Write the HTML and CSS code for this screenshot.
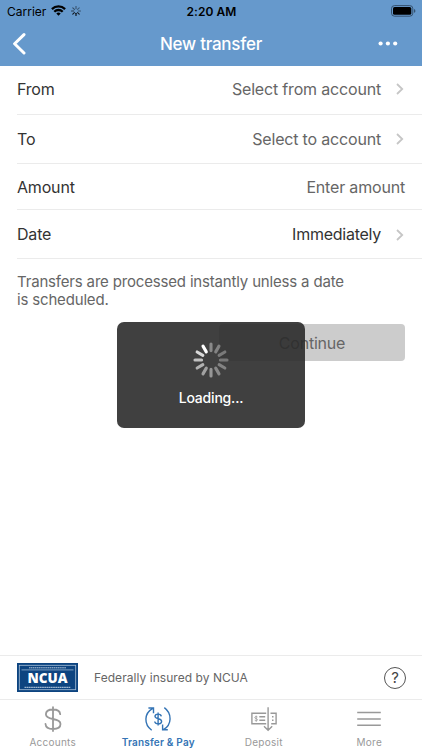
FILE: index.html
```html
<!DOCTYPE html>
<html lang="en">
<head>
<meta charset="utf-8">
<title>New transfer</title>
<link rel="stylesheet" href="styles.css">
</head>
<body>
<div class="app">
  <header class="header">
    <div class="status">
      <div class="status-left">
        <span class="carrier">Carrier</span>
        <svg class="wifi" width="15" height="11" viewBox="0 0 15 11" fill="none" stroke="#000" stroke-width="2.3"><path d="M.9 4.1a9.6 9.6 0 0 1 13.2 0M3.3 6.7a6 6 0 0 1 8.4 0"/><path d="M7.5 10.8 5.3 8.5a3.1 3.1 0 0 1 4.4 0z" fill="#000" stroke="none"/></svg>
        <svg class="activity" width="10" height="10" viewBox="-5 -5 10 10" stroke="#000" stroke-width="1.1" stroke-linecap="round"><path d="M0-2.2v-2.3" opacity=".45"/><path d="m1.6-1.6 1.6-1.6" opacity=".4"/><path d="M2.2 0h2.3" opacity=".45"/><path d="m1.6 1.6 1.6 1.6" opacity=".8"/><path d="M0 2.2v2.3"/><path d="m-1.6 1.6-1.6 1.6" opacity=".85"/><path d="M-2.2 0h-2.3" opacity=".6"/><path d="m-1.6-1.6-1.6-1.6" opacity=".5"/></svg>
      </div>
      <span class="time">2:20 AM</span>
      <svg class="battery" width="25" height="12" viewBox="0 0 25 12"><rect x=".5" y=".6" width="21.3" height="10.6" rx="3" fill="none" stroke="#2f4964" stroke-width=".9"/><rect x="2" y="2" width="18.3" height="7.8" rx="1.6"/><path d="M23.1 4q1.3.6 1.3 1.9t-1.3 1.9z" fill="#2f4964"/></svg>
    </div>
    <div class="nav">
      <svg class="back" width="14" height="22" viewBox="0 0 14 22" fill="none" stroke="#fff" stroke-width="3" stroke-linecap="round" stroke-linejoin="round"><path d="m12 1.6-9.400 9.200 9.400 9.200"/></svg>
      <h1>New transfer</h1>
      <svg class="dots" width="20" height="5" viewBox="0 0 20 5" fill="#fff"><circle cx="2.6" cy="2.5" r="2.1"/><circle cx="9.9" cy="2.5" r="2.1"/><circle cx="17.2" cy="2.5" r="2.1"/></svg>
    </div>
  </header>

  <main class="form">
    <div class="row row-from"><span class="label">From</span><span class="value">Select from account</span><svg class="chevron" width="8" height="12" viewBox="0 0 8 12"><path d="m1 1 5.2 5-5.2 5"/></svg></div>
    <div class="row row-to"><span class="label">To</span><span class="value">Select to account</span><svg class="chevron" width="8" height="12" viewBox="0 0 8 12"><path d="m1 1 5.2 5-5.2 5"/></svg></div>
    <div class="row row-amount"><span class="label">Amount</span><span class="value">Enter amount</span></div>
    <div class="row row-date"><span class="label">Date</span><span class="value chosen">Immediately</span><svg class="chevron" width="8" height="12" viewBox="0 0 8 12"><path d="m1 1 5.2 5-5.2 5"/></svg></div>
    <p class="note">Transfers are processed instantly unless a date<br>is scheduled.</p>
    <button class="continue">Continue</button>
  </main>

  <section class="insured">
    <div class="ncua">
      <svg width="61" height="29" viewBox="0 0 61 29"><rect width="61" height="29" fill="#0d4480"/><rect x="2.3" y="2.3" width="56.4" height="24.4" fill="none" stroke="#a9bfd7" stroke-width=".8"/><path d="M12 4.8h37" stroke="#b9cbdd" stroke-width="1" stroke-dasharray="1.5 .4"/><path d="M4.5 6.9h52" stroke="#8aa8c8" stroke-width=".9"/><path d="M7.5 24.4h46" stroke="#9db6d0" stroke-width="1.2" stroke-dasharray="1.8 .4"/><text x="30.5" y="20.2" text-anchor="middle" textLength="40" lengthAdjust="spacingAndGlyphs">NCUA</text></svg>
    </div>
    <span class="insured-text">Federally insured by NCUA</span>
    <span class="help">?</span>
  </section>

  <nav class="tabs">
    <div class="tab tab-accounts">
      <svg width="28" height="28" viewBox="0 0 28 28" fill="none" stroke="#999" stroke-width="1.8" stroke-linecap="round"><path d="M14 2.200v23.800M21.200 9.200C21 6.200 18.200 4.500 14 4.500S6.900 6.300 6.900 9.300c0 3.200 3 4 7.100 4.700s7.500 1.600 7.500 5c0 3.100-3.100 5-7.500 5s-7.300-1.900-7.500-5"/></svg>
      <span>Accounts</span>
    </div>
    <div class="tab tab-transfer active">
      <svg width="28" height="28" viewBox="0 0 28 28" fill="none" stroke="#3474b5" stroke-width="1.4"><path d="M7.700 25.200C-.2 19.500-.2 8.300 8.800 3.300M4.400 3h5.100v5.200M20.300 2.600c7.900 5.800 7.800 17-.9 22.100M18.600 19.500v5.300h5.200"/><path d="M14.100 7.600v12.800M17.300 11.300c-.2-1.500-1.400-2.200-3.200-2.200s-3.100.8-3.100 2.200c0 1.700 1.500 2 3.200 2.400 1.800.4 3.400.9 3.400 2.800 0 1.500-1.400 2.400-3.400 2.400s-3.300-.9-3.500-2.400"/></svg>
      <span>Transfer &amp; Pay</span>
    </div>
    <div class="tab tab-deposit">
      <svg width="28" height="28" viewBox="0 0 28 28" fill="none" stroke="#999" stroke-width="1.400"><path d="M16.200 8.200H1.900v10.500h14.300M20.500 8.200h5.600v10.500h-4.900M18.100 2.200v23M14 21.300l4.100 4 4.100-4M9.300 11.700h5.900M9.300 15.200h5.900M22 11.700h1.500M22 15.200h1.500"/><path d="M7.500 12c-2.200-1-3.300 0-2.500 1.100.6.700 1.900.5 2.400 1.200.7 1.100-.9 1.900-2.700.9M6.200 10.600v6.200" stroke-width=".8"/></svg>
      <span>Deposit</span>
    </div>
    <div class="tab tab-more">
      <svg width="28" height="28" viewBox="0 0 28 28" fill="none" stroke="#999" stroke-width="1.500"><path d="M2.200 7.500h23.600M2.200 13.900h23.600M2.200 20.300h23.600"/></svg>
      <span>More</span>
    </div>
  </nav>

  <div class="hud">
    <svg width="36" height="36" viewBox="-18 -18 36 36" stroke="#fff" stroke-width="3.100" stroke-linecap="round">
      <path d="M0-9.400v-6.600" opacity=".38"/><path d="M0-9.400v-6.600" transform="rotate(30)" opacity=".35"/><path d="M0-9.400v-6.600" transform="rotate(60)" opacity=".32"/><path d="M0-9.400v-6.600" transform="rotate(90)" opacity=".31"/><path d="M0-9.400v-6.600" transform="rotate(120)" opacity=".35"/><path d="M0-9.400v-6.600" transform="rotate(150)" opacity=".38"/><path d="M0-9.400v-6.600" transform="rotate(180)" opacity=".45"/><path d="M0-9.400v-6.600" transform="rotate(210)" opacity=".51"/><path d="M0-9.400v-6.600" transform="rotate(240)" opacity=".6"/><path d="M0-9.400v-6.600" transform="rotate(270)" opacity=".68"/><path d="M0-9.400v-6.600" transform="rotate(300)" opacity=".8"/><path d="M0-9.400v-6.600" transform="rotate(330)"/>
    </svg>
    <span>Loading...</span>
  </div>
</div>
</body>
</html>
```

FILE: styles.css
```css
* { box-sizing: border-box; }
body { margin: 0; background: #fff; font-family: Inter, "Liberation Sans", sans-serif; color: #333; }
svg { display: block; flex: none; }
.app { position: relative; width: 422px; height: 750px; display: flex; flex-direction: column; overflow: hidden; }
.header { height: 66px; background: #6699cc; }
.status { height: 22px; display: grid; grid-template-columns: 1fr auto 1fr; align-items: center; padding: 0 6px 0 7px; color: #000; }
.status-left { display: flex; align-items: center; }
.carrier { font-size: 12px; letter-spacing: 0; }
.wifi { margin: -1px 0 0 5px; }
.activity { margin-left: 5px; }
.time { font-size: 12px; font-weight: 600; letter-spacing: .05px; }
.battery { justify-self: end; margin-top: -1px; }
.nav { height: 44px; display: grid; grid-template-columns: 1fr auto 1fr; align-items: center; padding: 0 24px 0 12px; }
.nav h1 { margin: 0 0 0 12px; color: #fff; font-size: 17px; font-weight: 500; letter-spacing: -.25px; }
.dots { justify-self: end; margin-top: -2px; }

.form { flex: 1; display: flex; flex-direction: column; }
.row { flex: none; display: flex; align-items: center; margin-left: 17px; padding-right: 17px; border-bottom: 1px solid #ebebeb; font-size: 16px; line-height: 20px; letter-spacing: -.18px; }
.row-from { height: 49px; padding-bottom: 3px; }
.row-to { height: 49px; padding-bottom: 1px; }
.row-amount { height: 46px; }
.row-date { height: 49px; }
.label { flex: 1; }
.value { color: #666; }
.chosen { color: #333; letter-spacing: -.25px; }
.row-date .value { margin-top: -1px; }
.chevron { margin: 1px 1px 0 15px; fill: none; stroke: #c6c6c6; stroke-width: 1.8; }
.note { margin: 14px 17px 0; font-size: 15px; line-height: 18px; letter-spacing: -.17px; color: #666; }
.continue { align-self: flex-end; width: 186px; height: 37px; margin: 15px 17px 0 0; padding: 0; border: 0; border-radius: 4px; background: #ccc; color: #666; font: 16px Inter, sans-serif; letter-spacing: -.2px; }

.insured { height: 44px; display: flex; align-items: center; padding: 0 16px 0 17px; border-top: 1px solid #ebebeb; }
.ncua text { font: 800 14px "Open Sans", sans-serif; fill: #fff; }
.insured-text { flex: 1; margin-left: 16px; font-size: 12px; letter-spacing: .05px; color: #666; }
.help { width: 22px; height: 22px; border: 1px solid #555; border-radius: 50%; text-align: center; font-size: 15px; line-height: 20px; color: #444; }

.tabs { height: 51px; display: grid; grid-template-columns: repeat(4, 1fr); border-top: 1px solid #ebebeb; }
.tab { display: flex; flex-direction: column; align-items: center; padding-top: 5px; font-size: 10px; line-height: 14px; letter-spacing: .25px; color: #999; }
.tab span { margin-top: 2px; }
.active { color: #3474b5; font-weight: 600; letter-spacing: .2px; }

.hud { position: absolute; left: 117px; top: 322px; width: 188px; height: 106px; padding-top: 20px; border-radius: 7px; background: rgba(43, 43, 43, .9); display: flex; flex-direction: column; align-items: center; color: #fff; font-size: 14px; font-weight: 500; line-height: 18px; letter-spacing: -.2px; }
.hud span { margin-top: 11px; }
```
